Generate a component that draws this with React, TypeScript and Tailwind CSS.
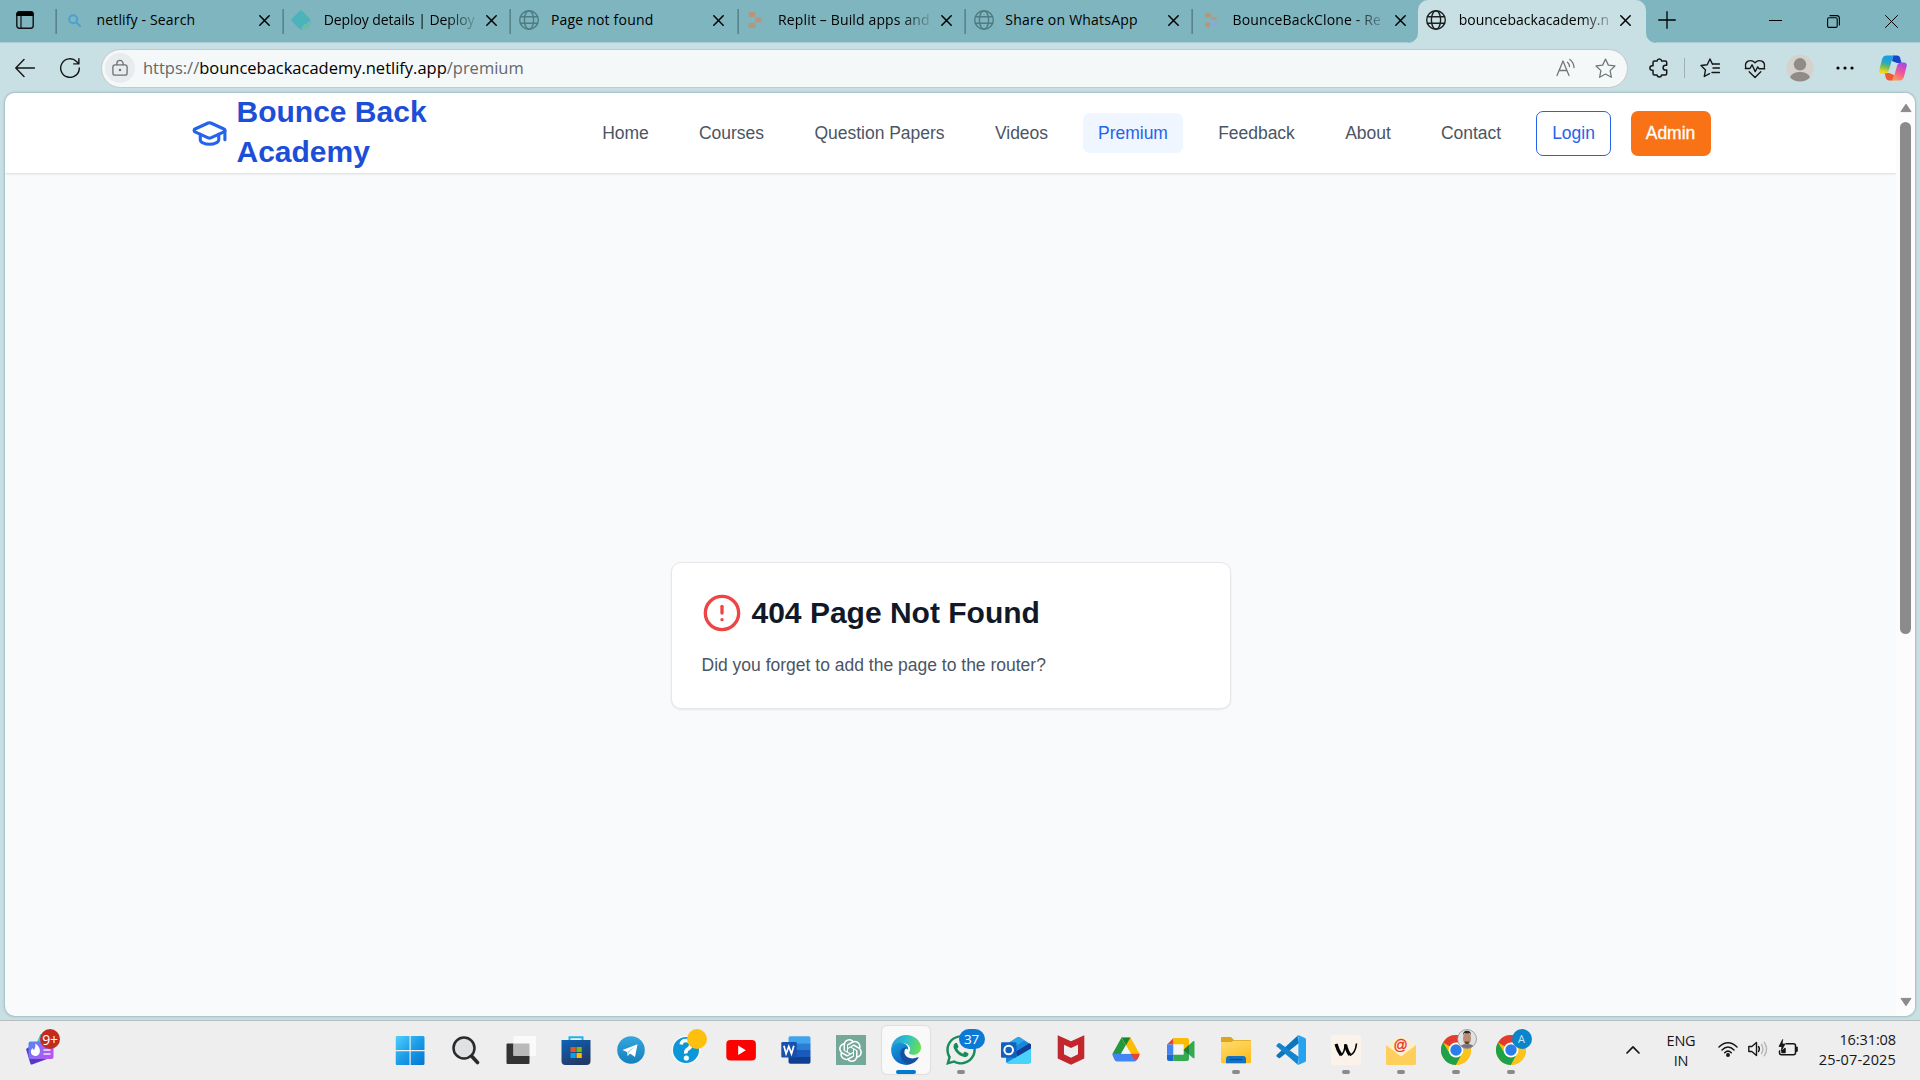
import React from "react";
import { GraduationCap, CircleAlert } from "lucide-react";
import { FaWhatsapp } from "react-icons/fa";
import { SiOpenai } from "react-icons/si";

type P = { children?: React.ReactNode; className?: string };

const Line = ({ children, className = "", box = 20, sw = 1.3 }: P & { box?: number; sw?: number }) => (
  <svg viewBox={`0 0 ${box} ${box}`} className={className} fill="none" stroke="currentColor" strokeWidth={sw} strokeLinecap="round" strokeLinejoin="round">
    {children}
  </svg>
);

const Globe = ({ className = "" }: P) => (
  <Line className={`size-5 ${className}`} sw={1.4}>
    <circle cx="10" cy="10" r="9.3" />
    <ellipse cx="10" cy="10" rx="4.6" ry="9.3" />
    <path d="M1.4 6.7h17.2M1.4 13.3h17.2" />
  </Line>
);

const SearchFav = () => (
  <Line className="-ml-[2px] size-[13px]" box={13} sw={2}>
    <circle cx="5.2" cy="5.2" r="4" stroke="#4f9fd0" />
    <path d="M8.4 8.4l3.6 3.6" stroke="#4f9fd0" />
  </Line>
);

const NetlifyFav = () => (
  <svg viewBox="0 0 20 20" className="-ml-[6px] size-5">
    <path d="M9.2 0.6 L10.8 0.6 L19.2 9 L19.2 11 L10.8 19.4 L9.2 19.4 L0.6 11 L0.6 9Z" fill="#4bb3ba" />
    <path d="M12 15.800l2.600 2.400 4.800-5" fill="none" stroke="#7eb5bf" strokeWidth="4.600" />
    <path d="M12 15.800l2.600 2.400 4.800-5" fill="none" stroke="#63bf9e" strokeWidth="2" />
  </svg>
);

const ReplitFav = () => (
  <svg viewBox="0 0 14 16" className="h-4 w-3.5 -ml-[3px]" fill="#b7977b">
    <rect x="0.5" y="0" width="7" height="5" rx="1" />
    <rect x="7" y="5.3" width="6.5" height="5" rx="1" />
    <rect x="0.5" y="10.7" width="7" height="5" rx="1" />
  </svg>
);

const CloneFav = () => (
  <svg viewBox="0 0 14 16" className="h-4 w-3.5 -ml-[1px]" fill="#b7977b">
    <rect x="1" y="0.8" width="6" height="4.6" rx="1" />
    <rect x="7" y="5.6" width="6" height="2" rx="0.6" />
    <rect x="1" y="10.2" width="5" height="5" rx="1" />
    <circle cx="10" cy="12.2" r="2.4" fill="#8ca6e0" />
  </svg>
);

const CloseX = () => (
  <Line className="size-[11px] shrink-0" box={11} sw={1.5}>
    <path d="M0.8 0.8l9.4 9.4M10.2 0.8L0.8 10.2" />
  </Line>
);

const tabs: { title: string; icon: React.ReactNode; cls: string; fade?: boolean }[] = [
  { title: "netlify - Search", icon: <SearchFav />, cls: "tracking-[0.15px]" },
  { title: "Deploy details | Deploy", icon: <NetlifyFav />, cls: "tracking-[-0.08px]", fade: true },
  { title: "Page not found", icon: <Globe className="-ml-[5px] text-[#4f7c83]" />, cls: "tracking-[0.2px]" },
  { title: "Replit – Build apps and", icon: <ReplitFav />, cls: "tracking-[0.14px]", fade: true },
  { title: "Share on WhatsApp", icon: <Globe className="-ml-[4px] text-[#4f7c83]" />, cls: "tracking-[0.22px]" },
  { title: "BounceBackClone - Re", icon: <CloneFav />, cls: "tracking-[0.15px]", fade: true },
];

const TabBody = ({ t }: { t: (typeof tabs)[number] }) => (
  <>
    <div className="flex h-5 w-[27px] shrink-0 items-center">{t.icon}</div>
    <div className={`w-[152px] shrink-0 text-[14px] leading-5 whitespace-nowrap ${t.cls} ${t.fade ? "[mask-image:linear-gradient(to_right,black_122px,transparent_156px)]" : ""}`}>{t.title}</div>
  </>
);

const TabStrip = () => (
  <div className="flex h-[43px] border-b border-[#a9cdd4] bg-[#7eb5bf]">
    <div className="flex w-[55px] shrink-0 pt-[11px] pl-4">
      <svg viewBox="0 0 18 18" className="size-[18px]">
        <rect x="0.8" y="0.8" width="16.4" height="16.4" rx="2.4" fill="none" stroke="#111" strokeWidth="1.4" />
        <path d="M0.5 5V3Q0.5 0.5 3 0.5h12Q17.5 0.5 17.5 3v2z" fill="#000" />
        <path d="M5 5v12" stroke="#111" strokeWidth="1.2" />
      </svg>
    </div>
    {tabs.map((t) => (
      <div key={t.title} className="flex w-[227.2px] shrink-0">
        <div className="mt-[9px] h-[25px] w-px translate-x-[0.6px] bg-[#42666c]" />
        <div className="flex h-5 translate-y-[10px] items-center pl-[13.5px]">
          <TabBody t={t} />
          <div className="ml-[10.5px] flex"><CloseX /></div>
        </div>
      </div>
    ))}
    <div className="relative h-[43px] w-[228px] shrink-0 rounded-t-[10px] bg-[#c8dfe3]">
      <div className="absolute bottom-0 -left-[10px] size-[10px] bg-[#c8dfe3]"><div className="size-full rounded-br-[10px] bg-[#7eb5bf]" /></div>
      <div className="absolute -right-[10px] bottom-0 size-[10px] bg-[#c8dfe3]"><div className="size-full rounded-bl-[10px] bg-[#7eb5bf]" /></div>
      <div className="flex h-5 translate-y-[10px] items-center pl-[7.5px]">
        <div className="flex w-[33px] shrink-0"><Globe className="text-[#1b1f20]" /></div>
        <div className="w-[150px] shrink-0 text-[14px] leading-5 tracking-[0.02px] whitespace-nowrap [mask-image:linear-gradient(to_right,black_122px,transparent_160px)]">bouncebackacademy.n</div>
        <div className="ml-[11px] flex"><CloseX /></div>
      </div>
    </div>
    <div className="flex w-[42px] justify-center pt-[11px]">
      <Line className="size-[18px]" box={18}><path d="M9 0.7v16.6M0.7 9h16.6" /></Line>
    </div>
    <div className="ml-auto flex">
      <div className="flex w-[58px] justify-center pt-[15px]"><Line className="size-[13px]" box={13} sw={1}><path d="M0 5.5h13" /></Line></div>
      <div className="flex w-[58px] justify-center pt-[15px]">
        <Line className="size-[13px]" box={13} sw={1.1}><rect x="0.6" y="2.8" width="9.6" height="9.6" rx="1.4" /><path d="M3 0.6h6.6q2.8 0 2.8 2.8V10" /></Line>
      </div>
      <div className="flex w-[58px] justify-center pt-[15px]"><Line className="size-[13px]" box={13} sw={1}><path d="M0.5 0.5l12 12M12.5 0.5l-12 12" /></Line></div>
    </div>
  </div>
);

const Cell = ({ children }: P) => <div className="flex w-[45px] items-center justify-center">{children}</div>;

const Toolbar = () => (
  <div className="flex h-[50px] items-center bg-[#c8dfe3] text-[#161616]">
    <div className="flex w-[101px] shrink-0 items-center gap-[25px] pl-[15px]">
      <Line className="size-5" sw={1.4}><path d="M9 1.5L0.8 10 9 18.500M1 10h18.500" /></Line>
      <Line className="size-5" sw={1.4}><path d="M19.300 10A9.300 9.300 0 1 1 16.500 3.400L18.700 5.600M18.900 0.800V5.900H13.700" /></Line>
    </div>
    <div className="flex h-[39px] w-[1526.500px] shrink-0 items-center rounded-full border border-[#c5c8c9] bg-[#f4f8f9] pl-[3px]">
      <div className="flex size-[30px] items-center justify-center rounded-full bg-[#e8ecee] text-[#707374]">
        <Line className="h-[18px] w-[16px]" box={18} sw={1.5}><rect x="1" y="5.500" width="16" height="11.500" rx="2.500" /><path d="M5.500 5.500V4a3.500 3.500 0 0 1 7 0v1.500" /><circle cx="9" cy="11.300" r="0.700" fill="currentColor" /></Line>
      </div>
      <div className="ml-[8px] text-[16.5px] leading-6 tracking-[-0.01px] whitespace-nowrap text-[#63686a]">
        https://<span className="text-black">bouncebackacademy.netlify.app</span>/premium
      </div>
      <div className="ml-auto flex items-center gap-[19px] pr-[11px] text-[#717678]">
        <Line className="size-5" sw={1.3}><path d="M1 17.500L7 3l6 14.500M3.200 12.500h7.600M11.500 4.200q2 1.600 2 4.300M13.800 1.500q4 3 4.200 8" /></Line>
        <Line className="size-[21px]" sw={1.2}><path d="M10 1l2.700 5.800 6.300.8-4.600 4.400 1.200 6.400L10 15.300l-5.600 3.100 1.200-6.400L1 7.600l6.300-.8z" /></Line>
      </div>
    </div>
    <div className="ml-[21.500px] flex w-[19px]">
      <Line className="size-[20px] shrink-0" sw={1.5}><path d="M4 4.500Q4 3 5.500 3H8a2.400 2.400 0 0 1 4.700 0h3.500Q17.700 3 17.700 4.500V7.300h-1.200a2.400 2.400 0 0 0 0 4.800h1.200v3.400q0 1.500-1.500 1.500H12.700a2.400 2.400 0 0 1-4.700 0H5.500Q4 17 4 15.500V12.300H3.200a2.300 2.300 0 0 1 0-4.600H4z" /></Line>
    </div>
    <div className="ml-4 h-5 w-px bg-[#9fb0b3]" />
    <div className="ml-[2px] flex items-center">
      <Cell><Line className="size-5" sw={1.4}><path d="M12.500 6.300L10 1 7.200 6.700 1 7.500l4.500 4.400L4.300 18.500l5.200-2.800M13 10h6.500M13 6h6.500M12 14.500h7.500" /></Line></Cell>
      <Cell><Line className="size-[21px] translate-x-[0.5px]" sw={1.3}><path d="M1.200 9C-.5 3 6 .5 10 4.500 14 .5 20.500 3 18.800 9M0.500 10h4.700l2-3.500 3 6.500 2.400-4.500 1.200 1.700h5.700M4.500 13L10 18.500 15.500 13" /></Line></Cell>
      <Cell>
        <svg viewBox="0 0 28 28" className="size-7"><circle cx="14" cy="14" r="13.500" fill="#d5d1cd" /><circle cx="14" cy="10.300" r="6.200" fill="#908b87" /><path d="M4 23.500Q6 18 14 18t10 5.500Q20 27.500 14 27.500T4 23.500z" fill="#908b87" /></svg>
      </Cell>
      <Cell><svg viewBox="0 0 18 4" className="h-1 w-[18px]"><circle cx="2" cy="2" r="1.600" /><circle cx="9" cy="2" r="1.600" /><circle cx="16" cy="2" r="1.600" /></svg></Cell>
      <div className="ml-[12px] flex">
        <svg viewBox="0 0 28 26" className="h-[26px] w-7">
          <defs>
            <linearGradient id="cpa" x1="0.5" y1="0" x2="0.300" y2="1"><stop offset="0" stopColor="#169ee8" /><stop offset="0.400" stopColor="#2aa6c4" /><stop offset="0.650" stopColor="#7ac04a" /><stop offset="0.900" stopColor="#f3d321" /></linearGradient>
            <linearGradient id="cpb" x1="0.700" y1="0" x2="0.300" y2="1"><stop offset="0" stopColor="#a349e8" /><stop offset="0.500" stopColor="#f0569a" /><stop offset="1" stopColor="#ff9a56" /></linearGradient>
          </defs>
          <path d="M14 0.500h4q2.500 0 3.200 2.400L22.500 8H18L13 6z" fill="#1546c8" />
          <path d="M14 25.500H10q-2.500 0-3.200-2.400L5.700 18H10l5 2z" fill="#ef5a35" />
          <path d="M7.500 0.500H16q-2 .5-2.800 3.200L9.800 15.500Q9 18.500 6 18.500H3.200Q-.5 18.500.4 14.500L3 4.500Q4 .5 7.500.5z" fill="url(#cpa)" />
          <path d="M20.500 25.500H12q2-.5 2.800-3.200l3.400-11.800Q19 7.500 22 7.500h2.800q3.700 0 2.800 4L25 21.500q-1 4-4.500 4z" fill="url(#cpb)" />
        </svg>
      </div>
    </div>
  </div>
);

const links = [
  { name: "Home", w: "w-[77px]" },
  { name: "Courses", w: "w-[95px]" },
  { name: "Question Papers", w: "w-[161px]" },
  { name: "Videos", w: "w-[83px]" },
  { name: "Premium", w: "w-[100px]" },
  { name: "Feedback", w: "w-[107px]" },
  { name: "About", w: "w-[76px]" },
  { name: "Contact", w: "w-[90px]" },
];

const Site = () => (
  <div className="mx-[5px] flex h-[923px] overflow-hidden rounded-[10px] bg-[#f9fafb] font-['Liberation_Sans',sans-serif] shadow-[0_0_2px_1px_rgba(90,130,138,0.35)]">
    <div className="flex w-[1891px] shrink-0 flex-col">
      <header className="flex h-20 shrink-0 justify-center bg-white shadow-[0_1px_2px_rgba(0,0,0,0.12)]">
        <div className="flex w-[1520px] items-center justify-between">
          <div className="flex items-center">
            <GraduationCap className="mr-[9px] size-[37px] text-[#2563eb]" strokeWidth={2} />
            <div className="w-[220px] -translate-y-px text-[30px] leading-10 font-bold text-[#1d4ed8]">Bounce Back Academy</div>
          </div>
          <nav className="flex items-center text-[17.5px] tracking-[-0.02px] text-[#4b5563]">
            {links.map((l) => (
              <div key={l.name} className={`mr-5 flex h-10 items-center justify-center rounded-[7px] pl-px whitespace-nowrap ${l.w} ${l.name === "Premium" ? "bg-[#eff6ff] text-[#2563eb]" : ""}`}>{l.name}</div>
            ))}
            <button className="h-[45px] w-[75px] rounded-[7px] border border-[#2563eb] pl-px text-[#2563eb]">Login</button>
            <button className="ml-5 h-[45px] w-20 rounded-[7px] bg-[#f97316] text-white [-webkit-text-stroke:0.3px_white]">Admin</button>
          </nav>
        </div>
      </header>
      <main className="flex justify-center pt-[389px]">
        <section className="h-[147px] w-[560px] rounded-[10px] border border-[#e5e7eb] bg-white p-[30px] shadow-[0_1px_2px_rgba(0,0,0,0.08)]">
          <div className="flex items-center gap-[10px]">
            <CircleAlert className="size-10 text-[#ef4444]" />
            <h1 className="text-[30px] leading-10 font-bold whitespace-nowrap text-[#111827]">404 Page Not Found</h1>
          </div>
          <p className="mt-5 text-[17.5px] leading-[25px] text-[#4b5563]">Did you forget to add the page to the router?</p>
        </section>
      </main>
    </div>
    <div className="flex grow flex-col items-center bg-[#fcfcfc] pt-[10px] pb-[9px]">
      <svg viewBox="0 0 12 10" className="h-[10px] w-3"><path d="M6 1.200L11 8.600H1z" fill="#8b8b8b" stroke="#8b8b8b" strokeLinejoin="round" /></svg>
      <div className="mt-[9px] h-[512px] w-[11px] rounded-full bg-[#8b8b8b]" />
      <svg viewBox="0 0 12 10" className="mt-auto h-[10px] w-3"><path d="M6 8.800L11 1.400H1z" fill="#8b8b8b" stroke="#8b8b8b" strokeLinejoin="round" /></svg>
    </div>
  </div>
);

const I = ({ children, className = "size-[30px]" }: P) => <svg viewBox="0 0 30 30" className={className}>{children}</svg>;

const Chrome = () => (
  <I>
    <circle cx="15" cy="15" r="15" fill="#fbbc05" />
    <path d="M15 15L2 7.500A15 15 0 0 1 28 7.500L15 8z" fill="#e33b2e" />
    <path d="M2 7.500A15 15 0 0 0 15 30L21.200 18.600 15 15 8.800 18.600z" fill="#1fa149" />
    <path d="M15 30A15 15 0 0 0 28 7.500H15L21.200 18.600z" fill="#fcc31e" />
    <circle cx="15" cy="15" r="7.400" fill="#fff" />
    <circle cx="15" cy="15" r="5.700" fill="#2b7de9" />
  </I>
);

const apps: { name: string; icon: React.ReactNode; badge?: React.ReactNode; run?: boolean; active?: boolean }[] = [
  {
    name: "start",
    icon: (
      <I className="size-[30px] -translate-x-[0.5px]">
        <defs><linearGradient id="win" x1="0" y1="0" x2="30" y2="30" gradientUnits="userSpaceOnUse"><stop stopColor="#52d2fc" /><stop offset="0.500" stopColor="#1b9de8" /><stop offset="1" stopColor="#0573d0" /></linearGradient></defs>
        <path d="M1.500 1H14V15H0V2.500Q0 1 1.500 1zM15.200 1H27.500Q29 1 29 2.500V15H15.200zM0 16.200H14V30H1.500Q0 30 0 28.500zM15.200 16.200H29V28.500Q29 30 27.500 30H15.200z" fill="url(#win)" />
      </I>
    ),
  },
  {
    name: "search",
    icon: (
      <I>
        <circle cx="13" cy="13" r="10.500" fill="#dfe1e3" stroke="#2a2a2a" strokeWidth="2.500" />
        <path d="M21 21.500l5.500 6" stroke="#2a2a2a" strokeWidth="3.600" strokeLinecap="round" />
      </I>
    ),
  },
  {
    name: "taskview",
    icon: (
      <I>
        <rect x="0.500" y="8.500" width="23" height="20.500" rx="1" fill="#333" />
        <rect x="7.500" y="1" width="22.500" height="20" rx="1" fill="#fafafa" />
        <path d="M7.500 8.500h16V21h-16z" fill="#b9b9b9" />
      </I>
    ),
  },
  {
    name: "store",
    icon: (
      <I>
        <defs><linearGradient id="st" x1="0" y1="0" x2="0.500" y2="1"><stop stopColor="#0b65b8" /><stop offset="1" stopColor="#233a68" /></linearGradient></defs>
        <path d="M8.500 7V2.200h13V7" fill="none" stroke="#1fb4ee" strokeWidth="2" />
        <path d="M.5 5h29v21q0 4-4 4h-21q-4 0-4-4z" fill="url(#st)" />
        <path d="M9.500 12h5.300v5H9.500z" fill="#f25022" /><path d="M15.500 12h5.300v5h-5.300z" fill="#7fba00" />
        <path d="M9.500 18h5.300v5H9.500z" fill="#00a4ef" /><path d="M15.500 18h5.300v5h-5.300z" fill="#ffb900" />
      </I>
    ),
  },
  {
    name: "telegram",
    icon: (
      <I>
        <defs><linearGradient id="tg" x1="0" y1="0" x2="0" y2="1"><stop stopColor="#35a6de" /><stop offset="1" stopColor="#1480bd" /></linearGradient></defs>
        <circle cx="15" cy="15" r="13.800" fill="url(#tg)" />
        <path d="M6.500 15L21.500 9.200 19 22l-5-3.500-2.200 2.500-.8-4z" fill="#fff" />
        <path d="M11 17l8-5.800-6 6.500-1.200 3.300z" fill="#b9d9ec" />
      </I>
    ),
  },
  {
    name: "help",
    icon: (
      <I>
        <circle cx="15" cy="15" r="13.800" fill="#0b97d8" stroke="#f7f7f7" strokeWidth="1.600" />
        <path d="M10.200 9.500Q10.500 5.500 15 5.500T19.800 9.800Q19.800 12.500 17 14T15 18.500" fill="none" stroke="#fff" strokeWidth="3.600" />
        <circle cx="15.300" cy="23" r="2.600" fill="#fff" />
      </I>
    ),
    badge: <div className="absolute -top-[6px] left-[16px] size-5 rounded-full bg-[#fec00f]" />,
  },
  {
    name: "youtube",
    icon: (
      <I><rect x="0.300" y="5" width="29.600" height="20.500" rx="4" fill="#f00" /><path d="M12.200 10.500v9.400l7.600-4.700z" fill="#fff" /></I>
    ),
  },
  {
    name: "word",
    icon: (
      <I>
        <path d="M7.500 8.200V3Q7.500 1.200 9.300 1.200H27.800Q29.500 1.200 29.500 3V8.200z" fill="#41a5ee" /><path d="M7.500 8.200H29.500V15H7.500z" fill="#2b7cd3" /><path d="M7.500 15H29.500v7H7.500z" fill="#185abd" />
        <path d="M7.500 22H29.500v5q0 1.800-1.700 1.800H9.300q-1.800 0-1.800-1.800z" fill="#103f91" />
        <rect x="0.300" y="7" width="15.500" height="15.500" rx="1.300" fill="#1750ae" />
        <path d="M2.900 10.800l2.200 8 2.700-7.300 2.700 7.300 2.300-8" fill="none" stroke="#fff" strokeWidth="1.700" />
      </I>
    ),
  },
  {
    name: "gpt",
    icon: <div className="flex size-[30px] items-center justify-center bg-[#74a899]"><SiOpenai className="size-[23px] text-white" /></div>,
  },
  {
    name: "edge",
    active: true,
    icon: (
      <I>
        <defs>
          <linearGradient id="eg1" x1="0" y1="0.300" x2="1" y2="0.500"><stop stopColor="#2798dc" /><stop offset="0.500" stopColor="#2fc1c8" /><stop offset="1" stopColor="#6be04f" /></linearGradient>
          <linearGradient id="eg2" x1="0" y1="0" x2="0.500" y2="1"><stop stopColor="#1aa0dc" /><stop offset="1" stopColor="#0b63c4" /></linearGradient>
        </defs>
        <path d="M0.200 13.500C1 5.500 7.500 0 15 0c8.500 0 15 6 15 12.500 0 4.500-3.500 7.300-7.500 7.300-3.300 0-5-1.200-4.300-2.500 2.600-4.300-.5-8.300-5.200-9C7 7.500 1.500 10 .2 13.500z" fill="url(#eg1)" />
        <path d="M0.200 13.500C2 8.500 8 6.500 12.500 8.300c3.500 1.200 5 3.700 4.600 6.200C14 12.500 10.500 15 10.500 19c0 5 3.500 9 8 10.600C8.500 31.500-.8 24 .2 13.500z" fill="url(#eg2)" />
        <path d="M16 12.200C11 12 8.500 16 9.500 20.500c1.300 5.500 5 8.500 9 9 3.500-.8 7-3.200 9-6.500.3-.7-.3-1-.8-.7-6 2.700-12.200.3-13.200-4-.4-2.500.5-4.800 2.500-6.100z" fill="#1450a0" />
      </I>
    ),
  },
  {
    name: "whatsapp",
    run: true,
    icon: <FaWhatsapp className="size-[34px] shrink-0 text-[#1a8c5b]" />,
    badge: <div className="absolute -top-[6px] left-[13px] flex h-5 w-[26px] items-center justify-center rounded-full bg-[#0a7ad6] text-[13.5px] tracking-[-0.3px] text-white">37</div>,
  },
  {
    name: "outlook",
    icon: (
      <I>
        <path d="M5 9.500L16 2.500q1.500-1 3 0L30 9.500V26q0 2.500-2.500 2.500h-20Q5 28.500 5 26z" fill="#1988dc" />
        <path d="M5 9.500L16 2.500q1.500-1 3 0l4.500 3L7 16z" fill="#2ca7ea" /><path d="M14 17L28.500 8.300 30 9.500v5L17 23z" fill="#123f96" />
        <path d="M5 28L30 13.500V26q0 2.500-2.500 2.500z" fill="#4ad3fa" />
        <rect x="0" y="7.300" width="15.500" height="15.500" rx="1.300" fill="#1262bd" /><circle cx="7.700" cy="15" r="4.300" fill="none" stroke="#fff" strokeWidth="2" />
      </I>
    ),
  },
  { name: "mcafee", icon: <I><path d="M1.700.3L15 6.200 28.300.3V23.500L15 29.800 1.700 23.500zM8 9.700V19.300L15 22.700l7-3.400V9.700L15 13z" fill="#c1272d" fillRule="evenodd" /></I> },
  {
    name: "drive",
    icon: (
      <I>
        <path d="M10.500 2.500L15 10 6.300 25.500Q5 27 3.800 25L1.700 20.500q-.5-1.200.2-2.400z" fill="#24973f" /><path d="M10.500 2.500h9L28.400 18.500H19.500L10.500 3z" fill="#fcbd00" />
        <path d="M10.500 2.500h9L15 10.200z" fill="#158537" /><path d="M1.500 18.800H28.600q-.2 2-1.600 4.200-1.800 3.500-3.500 3.500H6.500q-2 0-3.500-3z" fill="#4285f4" /><path d="M19.500 18.700h9.200q-.5 3-3 6.500-2.200-1-3.200-2z" fill="#ea4335" /><path d="M15 10.200l5 8.500H10z" fill="#f3f4f3" />
      </I>
    ),
  },
  {
    name: "meet",
    icon: (
      <I>
        <path d="M1 9.500L7.500 3v6.500z" fill="#e94235" /><path d="M7.500 3H21q2 0 2 2v9l-5.500 1V9.500h-10z" fill="#fbbc04" /><path d="M1 9.500h6.500v10H1z" fill="#4285f4" /><path d="M1 19.500h6.500V26H3q-2 0-2-2z" fill="#1967d2" />
        <path d="M7.500 19.500h10V15L23 11v13q0 2-2 2H7.500z" fill="#34a853" /><path d="M17.500 15L27 6.300Q28.500 5.300 28.500 7V22.500Q28.500 24 27 23z" fill="#34a853" /><path d="M17.500 15L23 10v9.500z" fill="#188038" /><path d="M7.500 9.500h10v10h-10z" fill="#f3f4f3" />
      </I>
    ),
  },
  {
    name: "explorer",
    run: true,
    icon: (
      <I>
        <defs><linearGradient id="fo" x1="0" y1="0" x2="0.500" y2="1"><stop stopColor="#ffdc73" /><stop offset="1" stopColor="#fcbf23" /></linearGradient></defs>
        <path d="M0 3q0-1 1-1h9l3 3h16q1 0 1 1v8H0z" fill="#dfa41c" /><path d="M0 7h10l3-1.200h17V27q0 1.300-1.300 1.300H1.300Q0 28.300 0 27z" fill="url(#fo)" />
        <path d="M5 28.300V24q0-3 3-3h14q3 0 3 3v4.300z" fill="#1273c5" /><path d="M9 24.500h12" stroke="#0c4a8b" strokeWidth="1.200" />
      </I>
    ),
  },
  {
    name: "code",
    icon: (
      <I>
        <path d="M.6 20L21.500.8 23 8 4 23q-.8.500-1.500 0L.6 21.200q-.5-.6 0-1.200z" fill="#0c76bd" /><path d="M.6 10L2.500 8.300Q3.200 7.800 4 8.300L23 22l-1.500 7.500L.6 11.200q-.5-.6 0-1.200z" fill="#1385cf" />
        <path d="M21.500.5Q22.300 0 23.300.4L29 3q1 .5 1 1.600V25.400Q30 26.500 29 27l-5.700 2.600q-1 .4-1.800-.2-1-1 .9-1.500V2.200Q20.500 1.500 21.500.5z" fill="#26a3ee" />
      </I>
    ),
  },
  {
    name: "flow",
    run: true,
    icon: (
      <I><rect width="30" height="30" rx="2.500" fill="#fbf3ea" /><path d="M9.500 20.500Q13.500 19 14.300 9M19 20.500Q24.500 18 25.500 8.500" fill="none" stroke="#000" strokeWidth="1.600" /><path d="M5 9q2 7 5 11M14.500 9.500q1.500 7 4.500 10.500" fill="none" stroke="#000" strokeWidth="3.200" /></I>
    ),
  },
  {
    name: "mail",
    run: true,
    icon: (
      <div className="relative">
        <I><path d="M15 .5L29.500 10H.5z" fill="#faeecb" /><path d="M3 8L15 .5 27 8v12H3z" fill="#faf0cf" /><path d="M0 10l15 11.500L30 10v18.500q0 1.500-1.500 1.500h-27Q0 30 0 28.500z" fill="#ffcf5c" /></I>
        <div className="absolute top-0 left-0 w-[30px] text-center font-['Liberation_Sans',sans-serif] text-[14px] leading-5 text-[#ef2f24] [-webkit-text-stroke:0.3px_#ef2f24]">@</div>
      </div>
    ),
  },
  {
    name: "chrome1",
    run: true,
    icon: <Chrome />,
    badge: (
      <svg viewBox="0 0 20 20" className="absolute -top-[6px] left-[16px] size-5">
        <clipPath id="face"><circle cx="10" cy="10" r="9.400" /></clipPath>
        <g clipPath="url(#face)"><path d="M0 0h20v20H0z" fill="#dfe1e4" /><path d="M2 20q1-5 8-5t8 5z" fill="#77727f" /><ellipse cx="10" cy="9.500" rx="4" ry="6" fill="#b98d73" /><path d="M6 6.500Q5.800 1.800 10 1.800T14 6.500L13 4.200H7z" fill="#2e2928" /><path d="M7.500 12.500h5l-1 2.500h-3z" fill="#5d4339" /></g>
        <circle cx="10" cy="10" r="9.500" fill="none" stroke="#8d9195" strokeWidth="0.800" />
      </svg>
    ),
  },
  {
    name: "chrome2",
    run: true,
    icon: <Chrome />,
    badge: <div className="absolute -top-[6px] left-[16px] flex size-5 items-center justify-center rounded-full bg-[#0a85cc] text-[11px] text-[#c5e4f6]">A</div>,
  },
];

const Taskbar = () => (
  <footer className="flex h-[60px] border-t border-[#b9bcbd] bg-[#eeeeee] text-[#161616]">
    <div className="w-[383px] shrink-0 pt-[8px] pl-[26px]">
      <div className="relative h-[36px] w-[35px]">
        <svg viewBox="0 0 35 36" className="h-9 w-[35px]">
          <defs><linearGradient id="wg" x1="0" y1="0" x2="1" y2="0.600"><stop stopColor="#4a8bf0" /><stop offset="0.500" stopColor="#8c6cf5" /><stop offset="1" stopColor="#b455f4" /></linearGradient></defs>
          <path d="M11 13L14.500 5 20 8v6z" fill="#35c5dc" /><path d="M0 20l3-2 18 12-15 5.500q-1.200.4-1.600-.8z" fill="#5a35c8" />
          <rect x="2.500" y="12.500" width="25" height="17.500" rx="2" fill="url(#wg)" />
          <path d="M9.500 14.500q5 4 4.300 8.500-.8 4-4.600 4-4.200-.3-4.300-4.500 0-2 1.600-3.500.2 1.500 1.500 2 1.800-2.500 1.500-6.500z" fill="#fff" /><path d="M17.500 21h7M17.500 25h7" stroke="#f3e6ff" strokeWidth="1.500" />
        </svg>
        <div className="absolute top-0 left-[14px] flex size-5 items-center justify-center rounded-full bg-[#c42b1c] text-[14px] tracking-[-0.3px] text-white">9+</div>
      </div>
    </div>
    <div className="flex shrink-0 pt-[5px]">
      {apps.map((a) => (
        <div key={a.name} className="flex w-[55px] justify-center">
          <div className={`flex h-[48px] w-[48px] flex-col items-center rounded-[5px] ${a.active ? "bg-[#f9f9f9] shadow-[0_0_1px_1px_rgba(0,0,0,0.07)]" : ""}`}>
            <div className="relative mt-[9px] flex size-[30px] items-center justify-center">{a.icon}{a.badge}</div>
            {a.active && <div className="mt-[5px] h-1 w-5 rounded-full bg-[#0078d4]" />}
            {a.run && <div className="mt-[5px] h-1 w-2 rounded-full bg-[#8a8a8a]" />}
          </div>
        </div>
      ))}
    </div>
    <div className="ml-auto flex pr-6">
      <Line className="mt-[22px] h-[14px] w-[14px]" box={14} sw={1.7}><path d="M1 10l6-6.200L13 10" /></Line>
      <div className="mt-[10px] ml-[21px] w-[40px] text-center text-[14.5px] leading-5 tracking-[-0.2px]"><div>ENG</div><div>IN</div></div>
      <div className="mt-[18px] ml-[17px] flex gap-[10px]">
        <Line className="size-5" sw={1.5}><path d="M1 8Q10-.5 19 8M4 11Q10 5 16 11M6.700 13.700Q10 10.500 13.300 13.700" /><circle cx="10" cy="16" r="1.200" fill="currentColor" /></Line>
        <Line className="size-5" sw={1.4}><path d="M.8 7.500h3L8.500 3.500v13L3.800 12.500h-3zM10.500 7.500q1.800 2.500 0 5" /><path d="M13.500 5.500q3 4.500 0 9M16.300 3.300q4.500 6.700 0 13.400" stroke="#b5b5b5" /></Line>
        <Line className="size-5" sw={1.5}><path d="M8 4.800h7.500q2 0 2 2v7q0 2-2 2H3.500q-2 0-2-2V12" /><path d="M18.800 8.500v3.500" strokeWidth="2" /><path d="M4.500.8L1 7.500h3L3.200 12 7 5H4.300z" fill="currentColor" strokeWidth="0.800" /><path d="M4 12l3-2.500v4H4z" fill="currentColor" /></Line>
      </div>
      <div className="mt-[9px] ml-[15px] w-[83px] text-right text-[14.5px] leading-5 whitespace-nowrap"><div className="tracking-[-0.1px]">16:31:08</div><div className="tracking-[0.15px]">25-07-2025</div></div>
    </div>
  </footer>
);

export default function App() {
  return (
    <div className="flex h-[1080px] w-[1920px] flex-col overflow-hidden bg-[#c8dfe3] font-['Open_Sans',sans-serif] text-black">
      <TabStrip />
      <Toolbar />
      <Site />
      <div className="h-1 shrink-0" />
      <Taskbar />
    </div>
  );
}
